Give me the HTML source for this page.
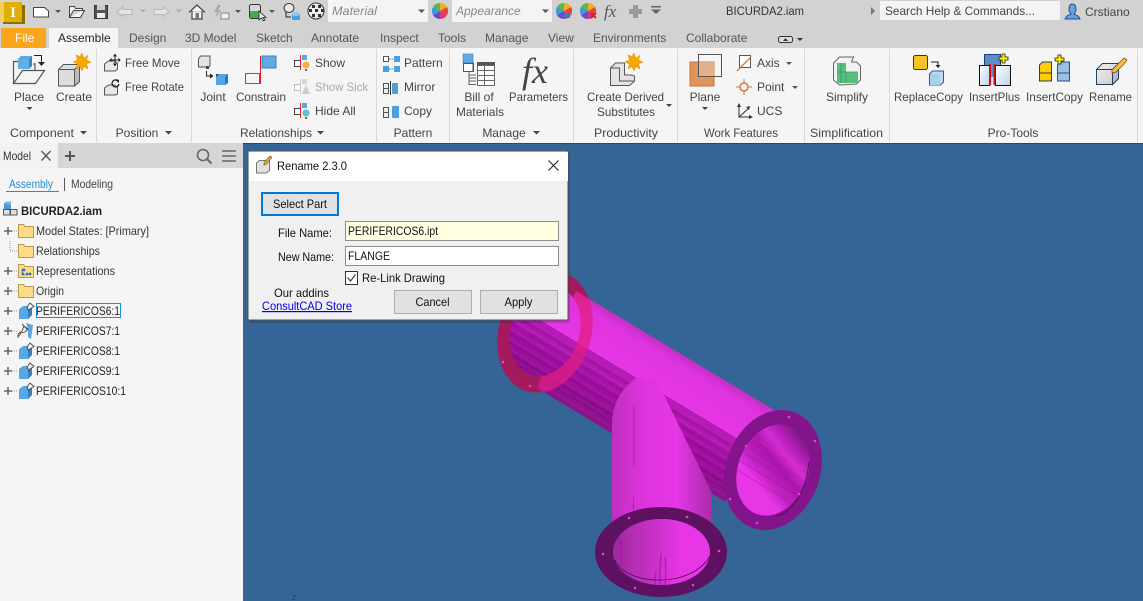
<!DOCTYPE html>
<html><head><meta charset="utf-8">
<style>
html,body{margin:0;padding:0;width:1143px;height:601px;overflow:hidden;background:#356496}
svg{display:block;position:absolute;left:0;top:0}
text{font-family:"Liberation Sans",sans-serif;font-size:12px;fill:#444}
.m{text-anchor:middle}
.d{fill:#111;font-size:12px}
.tab{fill:#555}
.g{fill:#aaa}
.tr{font-size:11.6px;fill:#333}
</style></head><body>
<svg width="1143" height="601" viewBox="0 0 1143 601" xmlns="http://www.w3.org/2000/svg">
<defs>
<linearGradient id="tube" x1="0" y1="0" x2="0" y2="1">
<stop offset="0" stop-color="#c62ec6"/><stop offset=".1" stop-color="#df34df"/><stop offset=".41" stop-color="#e636e6"/><stop offset=".45" stop-color="#b41cb4"/><stop offset=".7" stop-color="#a010a0"/><stop offset="1" stop-color="#8c128c"/>
</linearGradient>
<linearGradient id="branch" x1="0" y1="0" x2="1" y2="0">
<stop offset="0" stop-color="#c030c0"/><stop offset=".35" stop-color="#e034e0"/><stop offset=".65" stop-color="#e636e6"/><stop offset="1" stop-color="#a92ba9"/>
</linearGradient>
<linearGradient id="hole3" x1="0" y1="0" x2="1" y2="0">
<stop offset="0" stop-color="#9c2a9c"/><stop offset=".45" stop-color="#cc32cc"/><stop offset=".7" stop-color="#e636e6"/><stop offset="1" stop-color="#e636e6"/>
</linearGradient>
<linearGradient id="hole2" gradientUnits="userSpaceOnUse" x1="795" y1="430" x2="748" y2="510">
<stop offset="0" stop-color="#701c78"/><stop offset=".12" stop-color="#a51aa8"/><stop offset=".28" stop-color="#d42cd4"/><stop offset=".42" stop-color="#ac14ac"/><stop offset=".6" stop-color="#c424c4"/><stop offset=".72" stop-color="#e636e6"/><stop offset="1" stop-color="#e636e6"/>
</linearGradient>
<linearGradient id="glass" x1="0" y1="0" x2="1" y2="1"><stop offset="0" stop-color="#fff"/><stop offset="1" stop-color="#b8d4ea"/></linearGradient>
<linearGradient id="cubeg" x1="0" y1="0" x2="1" y2="1"><stop offset="0" stop-color="#f2f2f2"/><stop offset="1" stop-color="#c8c8c8"/></linearGradient>
<clipPath id="tubeclip">
<polygon points="576,291 779,413 725,502 537,388"/>
<ellipse cx="545" cy="331" rx="34" ry="46" transform="rotate(18 545 331)"/>
</clipPath>
<clipPath id="polyclip"><polygon points="576,291 779,413 725,502 537,388"/></clipPath>
<clipPath id="hole2c"><ellipse cx="773" cy="470" rx="35" ry="47" transform="rotate(21 773 470)"/></clipPath>
<symbol id="folder" viewBox="0 0 16 14" width="16" height="14"><path d="M.5 13.5V.5h5l1.500 2h8.500v11z" fill="#fbdb84" stroke="#b79a4e"/></symbol>
<symbol id="part" viewBox="0 0 17 17" width="17" height="17">
<path d="M1 7l4-3h9v9l-4 4H1z" fill="#58a6e2"/><path d="M10 7l4-3v9l-4 4z" fill="#3a80c0"/>
<path d="M9 5l3-4 4 3.500-4 2.500-1 2z" fill="#f2f2f2" stroke="#444" stroke-width=".9"/></symbol>
<symbol id="wheel" viewBox="0 0 16 16" width="16" height="16">
<path d="M8 8V0a8 8 0 0 1 7 4z" fill="#f4b020"/><path d="M8 8l7-4a8 8 0 0 1 0 8z" fill="#e2483a"/><path d="M8 8l7 4a8 8 0 0 1-7 4z" fill="#d63a80"/><path d="M8 8v8a8 8 0 0 1-7-4z" fill="#6a48d0"/><path d="M8 8l-7 4a8 8 0 0 1 0-8z" fill="#3a9ad8"/><path d="M8 8L1 4a8 8 0 0 1 7-4z" fill="#58b848"/></symbol>
<symbol id="star" viewBox="-9 -9 18 18" width="18" height="18"><path d="M0-9l2 5.500L6-7 4.500-2 9 0 4.500 2 6 7 2 4.500 0 9-2 4.500-6 7-4.500 2-9 0-4.500-2-6-7-2-5.500z" fill="#f7a800" stroke="#e88a00" stroke-width=".5"/></symbol>
</defs>

<!-- viewport -->
<rect x="243" y="143" width="900" height="458" fill="#356496"/>
<text x="292" y="600" style="font-size:9px;fill:#2233dd">z</text>

<!-- 3D model -->
<g transform="rotate(18 545 332)">
<path fill-rule="evenodd" d="M499 332a46 62 0 1 0 92 0a46 62 0 1 0-92 0zM511 331a34 46 0 1 0 68 0a34 46 0 1 0-68 0z" fill="#a5195f"/>
</g>
<g clip-path="url(#tubeclip)">
<g transform="translate(565 284) rotate(31)">
<rect x="-70" y="-20" width="330" height="20" fill="#c62ec6"/>
<rect x="-70" width="330" height="104" fill="url(#tube)"/>
<g opacity=".5">
<rect x="-70" y="44" width="330" height="1.500" fill="#8e0c90"/><rect x="-70" y="49" width="330" height="1" fill="#cc26cc"/>
<rect x="-70" y="52" width="330" height="2" fill="#900e92"/><rect x="-70" y="57" width="330" height="1.500" fill="#d42cd4"/>
<rect x="-70" y="61" width="330" height="2" fill="#8a0c8c"/><rect x="-70" y="66" width="330" height="1" fill="#c824c8"/>
<rect x="-70" y="69" width="330" height="2.500" fill="#860c88"/><rect x="-70" y="75" width="330" height="1" fill="#c020c0"/>
<rect x="-70" y="78" width="330" height="2" fill="#800a82"/><rect x="-70" y="84" width="330" height="1" fill="#b81cb8"/>
<rect x="-70" y="87" width="330" height="2.500" fill="#760a78"/><rect x="-70" y="93" width="330" height="1.500" fill="#7c0a80"/>
<rect x="-70" y="98" width="330" height="1.500" fill="#a020a0"/>
</g>
</g>
</g>
<!-- back flange overlay where it crosses the tube -->
<g clip-path="url(#polyclip)">
<g transform="rotate(18 545 332)">
<path fill-rule="evenodd" d="M499 332a46 62 0 1 0 92 0a46 62 0 1 0-92 0zM511 331a34 46 0 1 0 68 0a34 46 0 1 0-68 0z" fill="#e11e82" fill-opacity=".75"/>
</g>
</g>
<circle cx="503" cy="362" r="1.200" fill="#e050d0"/><circle cx="530" cy="386" r="1.200" fill="#e050d0"/>
<!-- branch -->
<path d="M612 423C612 402 624 386 638 377L652 378L663 393L712 493V530H612z" fill="url(#branch)"/>
<path d="M634 406V467M633.500 497V510" stroke="#9a2f9e" stroke-width=".8"/>
<!-- right flange -->
<g transform="rotate(20 773 470)">
<ellipse cx="773" cy="470" rx="47" ry="61.500" fill="#84148c"/>
</g>
<ellipse cx="773" cy="470" rx="35" ry="47" transform="rotate(21 773 470)" fill="url(#hole2)"/>
<g clip-path="url(#hole2c)" opacity=".35">
<path d="M735 440L815 488M735 448L815 496M735 458L815 506M730 466L810 514" stroke="#9a109a" stroke-width="1.200" fill="none"/>
<path d="M740 430L815 475" stroke="#e040e0" stroke-width="1" fill="none"/>
</g>
<path d="M776 516C792 513 806 492 809 462" stroke="#501058" fill="none"/>
<g fill="#d848d0"><circle cx="789" cy="417" r="1.300"/><circle cx="815" cy="441" r="1.300"/><circle cx="746" cy="446" r="1.300"/><circle cx="730" cy="499" r="1.300"/><circle cx="757" cy="523" r="1.300"/><circle cx="799" cy="494" r="1.300"/></g>
<!-- bottom flange -->
<path fill-rule="evenodd" d="M595 552a66 45 0 1 0 132 0a66 45 0 1 0-132 0zM613 552a48.500 33 0 1 0 97 0a48.500 33 0 1 0-97 0z" fill="#5e1160"/>
<ellipse cx="661.500" cy="552" rx="48.500" ry="33" fill="url(#hole3)"/>
<path d="M660 585c-1-8 0-18 1-32M665 585c1-10 1-20 0-28M655 585c0-5 0-10 1-14M620 560V535M622 565V540" stroke="#a815a8" stroke-width="1.500" opacity=".7"/>
<path d="M615 560C625 585 690 590 710 556" stroke="#4a0e50" fill="none" stroke-width=".8"/>
<g fill="#d848d0"><circle cx="629" cy="518" r="1.300"/><circle cx="687" cy="517" r="1.300"/><circle cx="603" cy="554" r="1.300"/><circle cx="719" cy="551" r="1.300"/><circle cx="635" cy="588" r="1.300"/><circle cx="693" cy="585" r="1.300"/></g>

<!-- title bar -->
<rect x="0" y="0" width="1143" height="48" fill="#d2d2d2"/>
<rect x="3" y="5" width="22" height="19" fill="#8a7000"/>
<rect x="0" y="2" width="22" height="20" fill="#dfb000"/><rect x="0" y="2" width="4" height="20" fill="#eed05a"/>
<text x="13" y="17" class="m" style="font:bold 15px 'Liberation Serif',serif;fill:#fff">I</text>
<!-- new -->
<path d="M33.500 7.500h11l4 3.500v6h-15z" fill="#fff" stroke="#444"/>
<path d="M55 10h6l-3 3z" fill="#555"/>
<path d="M69.500 17.500v-11h5l1 2h7v2M69.500 17.500h11l4-7h-11z" fill="#f4f4f4" stroke="#444"/>
<rect x="94.500" y="5.500" width="13" height="13" fill="#555" stroke="#333"/><rect x="97" y="5" width="8" height="5" fill="#ccc"/><rect x="97" y="13" width="8" height="5" fill="#eee"/>
<path d="M117 11.500l6-4.500v2.500h9v5h-9v2z" fill="#e4e4e4" stroke="#b5b5b5"/><path d="M140 9.500h6l-3 3z" fill="#aaa"/>
<path d="M169 11.500l-6-4.500v2.500h-9v5h9v2z" fill="#e4e4e4" stroke="#b5b5b5"/><path d="M176 9.500h6l-3 3z" fill="#aaa"/>
<path d="M189 12.500L197 5l8 7.500M192 11v8h10v-8" fill="#f7f7f7" stroke="#444" stroke-width="1.200"/><rect x="195.500" y="13" width="3.500" height="6" fill="#777"/>
<path d="M218 5l-4 7h3l-2 6 6-8h-3l3-5z" fill="#a8a8a8"/><path d="M221 13h8v6h-8z" fill="#eee" stroke="#888"/><path d="M235 10h6l-3 3z" fill="#555"/>
<rect x="249.500" y="4.500" width="11" height="14" rx="2" fill="#d8d8d8" stroke="#333"/><rect x="250" y="11" width="10" height="7" fill="#49a94a"/>
<path d="M259 11v9l2.500-2 2 3 1.500-1-2-2.500h3z" fill="#eee" stroke="#222" stroke-width=".8"/><path d="M269 10h6l-3 3z" fill="#555"/>
<ellipse cx="289" cy="8" rx="5" ry="4.500" fill="#e8e8e8" stroke="#333"/><path d="M286 12v5h5" fill="none" stroke="#222"/><path d="M292 14h8v6h-8z" fill="#4aa0dc"/><ellipse cx="296" cy="14" rx="4" ry="2" fill="#8cc8f0"/>
<circle cx="316" cy="11" r="8" fill="#eee" stroke="#333"/>
<g fill="#333"><rect x="312" y="5" width="3" height="3"/><rect x="318" y="5" width="3" height="3"/><rect x="309" y="9" width="3" height="3"/><rect x="315" y="9" width="3" height="3"/><rect x="321" y="9" width="3" height="3"/><rect x="312" y="14" width="3" height="3"/><rect x="318" y="14" width="3" height="3"/></g>
<rect x="328" y="0" width="100" height="22" fill="#f4f4f4"/>
<text x="332" y="15" style="font-style:italic;fill:#888" textLength="45" lengthAdjust="spacingAndGlyphs">Material</text>
<path d="M418 9.500h7l-3.500 3.500z" fill="#555"/>
<use href="#wheel" x="432" y="3"/>
<rect x="452" y="0" width="100" height="22" fill="#f4f4f4"/>
<text x="456" y="15" style="font-style:italic;fill:#888">Appearance</text>
<path d="M542 9.500h7l-3.500 3.500z" fill="#555"/>
<use href="#wheel" x="556" y="3"/><rect x="564" y="13" width="6" height="5" fill="#2a80d0"/>
<use href="#wheel" x="580" y="3"/><path d="M591 13l5 5M596 13l-5 5" stroke="#e02020" stroke-width="2"/>
<text x="604" y="17" style="font:italic 17px 'Liberation Serif',serif;fill:#555">fx</text>
<path d="M633 5h5v4h4v5h-4v4h-5v-4h-4V9h4z" fill="#999"/>
<path d="M651 6h10v1.500h-10zM651 9.500h10l-5 4.500z" fill="#666"/>
<text x="726" y="15" style="fill:#333" textLength="78" lengthAdjust="spacingAndGlyphs">BICURDA2.iam</text>
<path d="M871 7l4 4-4 4z" fill="#777"/>
<rect x="880" y="1" width="180" height="19" fill="#f4f4f4"/>
<text x="885" y="15" style="fill:#444" textLength="150" lengthAdjust="spacingAndGlyphs">Search Help &amp; Commands...</text>
<path d="M1072 4c3 0 4 2.500 4 5 0 3-1 4-2 5 2 1 5 1.500 6 5h-15c1-3.500 4-4 6-5-1-1-2-2-2-5 0-2.500 1-5 3-5z" fill="#6aa0d8" stroke="#1f4f90"/>
<text x="1085" y="16" style="fill:#444">Crstiano</text>

<!-- tabs -->
<rect x="1" y="28" width="45" height="20" fill="#fba51c"/>
<text x="15" y="42" style="fill:#fff">File</text>
<rect x="49" y="28" width="69" height="20" fill="#f5f5f5"/>
<text x="58" y="42" style="fill:#222">Assemble</text>
<g class="tabs">
<text x="129" y="42" class="tab">Design</text><text x="185" y="42" class="tab">3D Model</text><text x="256" y="42" class="tab">Sketch</text><text x="311" y="42" class="tab">Annotate</text><text x="380" y="42" class="tab">Inspect</text><text x="438" y="42" class="tab">Tools</text><text x="485" y="42" class="tab">Manage</text><text x="548" y="42" class="tab">View</text><text x="593" y="42" class="tab">Environments</text><text x="686" y="42" class="tab">Collaborate</text>
</g>
<rect x="778.500" y="36.500" width="14" height="6" rx="2" fill="#ddd" stroke="#333"/><path d="M783 41l2.500-3 2.500 3z" fill="#333"/>
<path d="M797 38h6l-3 3z" fill="#333"/>

<!-- ribbon -->
<rect x="0" y="48" width="1143" height="95" fill="#f5f5f5"/>
<rect x="243" y="143" width="900" height="1" fill="#27486e"/>
<g fill="#d8d8d8">
<rect x="96" y="49" width="1" height="93"/><rect x="191" y="49" width="1" height="93"/><rect x="376" y="49" width="1" height="93"/><rect x="449" y="49" width="1" height="93"/><rect x="573" y="49" width="1" height="93"/><rect x="677" y="49" width="1" height="93"/><rect x="804" y="49" width="1" height="93"/><rect x="889" y="49" width="1" height="93"/><rect x="1137" y="49" width="1" height="93"/>
</g>

<!-- Place -->
<path d="M13.500 83.500v-22h5M13.500 83.500h22l9-13h-22zM35 70v-6h-2" fill="none" stroke="#555" stroke-width="1.200"/>
<path d="M18 59l3-3h11v10l-3 3H18z" fill="#5ba8e2"/><path d="M29 59l3-3v10l-3 3z" fill="#3a82c2"/><rect x="18" y="59" width="11" height="10" fill="#62aee6"/>
<path d="M34 55.500h7.500v7" fill="none" stroke="#222"/><path d="M38 62h7l-3.500 4z" fill="#222"/>
<text x="29" y="101" class="m">Place</text><path d="M26.500 107h6l-3 3z" fill="#444"/>
<!-- Create -->
<path d="M58.500 69.500l5-5h16v17l-5 4.500h-16z" fill="#ddd" stroke="#555"/><path d="M74.500 69.500l5-5v17l-5 4.500z" fill="#bbb" stroke="#555"/><path d="M58.500 69.500h16v16.500" fill="none" stroke="#555"/>
<use href="#star" x="73" y="53"/>
<text x="74" y="101" class="m">Create</text>
<!-- Free move -->
<path d="M104.500 64l4-3h6l3 2v6l-2 2h-11z" fill="#e6e6e6" stroke="#555"/>
<path d="M115 55v10M110.500 60h9M113.500 56.500l1.500-2 1.500 2M113.500 63.500l1.500 2 1.500-2M111.500 58.500l-1.500 1.500 1.500 1.500M118.500 58.500l1.500 1.500-1.500 1.500" fill="none" stroke="#222"/>
<text x="125" y="67" textLength="55" lengthAdjust="spacingAndGlyphs">Free Move</text>
<path d="M104.500 88l4-3h6l3 2v7l-2 1h-11z" fill="#e6e6e6" stroke="#555"/>
<path d="M119 84a3.500 3.500 0 1 1-1.500-3.500" fill="none" stroke="#222" stroke-width="1.300"/><path d="M115 80l4-.5v3.500z" fill="#222"/>
<text x="125" y="91" textLength="59" lengthAdjust="spacingAndGlyphs">Free Rotate</text>
<!-- Joint -->
<path d="M198.500 59l2-3h9.500v10l-2 1h-9.500z" fill="#e4e4e4" stroke="#555"/>
<rect x="206" y="66" width="3" height="3" fill="#444"/>
<path d="M206.500 71v5h5" fill="none" stroke="#222"/><path d="M210 73.500l3.500 2.500-3.500 2.500z" fill="#222"/><rect x="216" y="74" width="3" height="3" fill="#444"/>
<path d="M216 77l3-3h9v9l-3 2h-9z" fill="#55a6e4"/><path d="M225 77l3-3v9l-3 2z" fill="#2f78b8"/>
<text x="213" y="101" class="m">Joint</text>
<!-- Constrain -->
<rect x="260" y="56" width="1" height="28" fill="#d82020"/>
<rect x="262" y="56" width="14" height="12" fill="#62aae4" stroke="#3a80c0"/>
<rect x="245.500" y="73.500" width="14" height="10" fill="#f5f5f5" stroke="#666"/>
<text x="261" y="101" class="m" textLength="50" lengthAdjust="spacingAndGlyphs">Constrain</text>
<!-- show -->
<g id="sh"><path d="M294.500 60.500h6v6h-6z" fill="#fff" stroke="#444"/><rect x="300" y="55" width="1" height="15" fill="#d82020"/><rect x="302" y="55" width="5" height="5" fill="#5aa6e0"/><circle cx="306" cy="65" r="3.500" fill="#f0b040"/><rect x="305" y="69" width="2" height="2" fill="#666"/></g>
<text x="315" y="67">Show</text>
<path d="M294.500 84.500h6v6h-6z" fill="#fff" stroke="#bbb"/><rect x="300" y="79" width="1" height="15" fill="#ccc"/><rect x="302" y="79" width="5" height="5" fill="#d5d5d5"/><path d="M306 85l4 9h-8z" fill="#ccc"/>
<text x="315" y="91" class="g" textLength="53" lengthAdjust="spacingAndGlyphs">Show Sick</text>
<path d="M294.500 108.500h6v6h-6z" fill="#fff" stroke="#444"/><rect x="300" y="103" width="1" height="15" fill="#d82020"/><rect x="302" y="103" width="5" height="5" fill="#5aa6e0"/><circle cx="306" cy="113" r="3.500" fill="#58c0d0"/><rect x="305" y="117" width="2" height="2" fill="#666"/>
<text x="315" y="115">Hide All</text>
<!-- pattern group -->
<rect x="383.500" y="56.500" width="5" height="5" fill="#fff" stroke="#555"/><rect x="394" y="56" width="6" height="6" fill="#4aa0dc"/><rect x="383" y="66" width="6" height="6" fill="#4aa0dc"/><rect x="394" y="66" width="6" height="6" fill="#4aa0dc"/><path d="M389 59h5M389 69h5" stroke="#666" stroke-dasharray="1.500 1"/>
<text x="404" y="67">Pattern</text>
<path d="M383.500 83.500h5v10h-5zM383.500 88.500h5" fill="#eee" stroke="#555"/><rect x="390" y="81" width="1" height="14" fill="#333"/><rect x="392" y="83" width="6" height="11" rx="1" fill="#4aa0dc"/>
<text x="404" y="91">Mirror</text>
<path d="M383.500 107.500h5v10h-5zM383.500 112.500h5" fill="#eee" stroke="#555"/><rect x="392" y="106" width="7" height="12" rx="1" fill="#4aa0dc"/>
<text x="404" y="115">Copy</text>
<!-- BOM -->
<rect x="463" y="54" width="10" height="9" fill="#62aae4" stroke="#3a80c0" stroke-width=".6"/>
<path d="M463.500 63.500h10v8h-10zM473 62v10" fill="#fff" stroke="#555"/>
<rect x="477" y="62" width="18" height="3" fill="#555"/>
<path d="M477.500 65.500h17v20h-17zM477.500 70.500h17M477.500 75.500h17M477.500 80.500h17M484.500 65.500v20" fill="#fff" stroke="#666"/>
<path d="M469 72v13M469 75h7M469 78h7M469 81h7M469 84.500h7" stroke="#666" fill="none"/>
<text x="479" y="101" class="m">Bill of</text><text x="480" y="116" class="m" textLength="48" lengthAdjust="spacingAndGlyphs">Materials</text>
<text x="522" y="83" style="font:italic 36px 'Liberation Serif',serif;fill:#444">fx</text>
<text x="538.500" y="101" class="m" textLength="59" lengthAdjust="spacingAndGlyphs">Parameters</text>
<!-- derived -->
<path d="M610.500 68l5-5h9v12h6l4 1v5l-5 4.500h-19z" fill="#e4e4e4" stroke="#555"/><path d="M610.500 68h9v13h14" fill="none" stroke="#555"/>
<use href="#star" x="625" y="53"/>
<text x="625.500" y="101" class="m" textLength="77" lengthAdjust="spacingAndGlyphs">Create Derived</text><text x="626" y="116" class="m" textLength="58" lengthAdjust="spacingAndGlyphs">Substitutes</text>
<path d="M666 104h6l-3 3z" fill="#444"/>
<!-- plane -->
<rect x="690" y="62" width="24" height="24" fill="#e0935a" stroke="#c8763a"/>
<rect x="698" y="62" width="16" height="15" fill="#e0b08c"/>
<rect x="698.500" y="54.500" width="23" height="22" fill="none" stroke="#555"/>
<text x="705" y="101" class="m">Plane</text><path d="M702 107h6l-3 3z" fill="#444"/>
<rect x="739.500" y="55.500" width="11" height="12" fill="#fff" stroke="#555"/><path d="M737 71l14-14" stroke="#d8763a" stroke-width="1.300"/>
<text x="757" y="67">Axis</text><path d="M786 62h6l-3 3z" fill="#555"/>
<path d="M736 87h16M744 79v16" stroke="#d8763a"/><circle cx="744" cy="87" r="4" fill="#f5f5f5" stroke="#d8763a" stroke-width="1.500"/>
<text x="757" y="91">Point</text><path d="M792 86h6l-3 3z" fill="#555"/>
<path d="M739 104v13h12M739 117l10-9" fill="none" stroke="#333"/><path d="M737 107l2-4 2 4zM749 115l4 2-4 2zM746 107l4-1-1 4z" fill="#333"/>
<text x="757" y="115">UCS</text>
<text x="741" y="137" class="m" textLength="74" lengthAdjust="spacingAndGlyphs">Work Features</text>
<!-- simplify -->
<path d="M833.500 63l6-6h14l-2 5h5l4 4v14l-4 4-17 1-6-5z" fill="#f2f2f2" stroke="#666"/>
<path d="M837 63h9v9h12v11h-21z" fill="#55bf80"/><path d="M837 72h21M846 72v11M841 63v20" stroke="#2f9a5a" stroke-width=".7"/>
<text x="847" y="101" class="m">Simplify</text>
<!-- replacecopy -->
<rect x="913.500" y="55.500" width="14" height="14" rx="2" fill="#f4c420" stroke="#333"/>
<path d="M931 62h7v4" fill="none" stroke="#222"/><path d="M935.500 65h5l-2.500 3z" fill="#222"/>
<path d="M929.500 74l3-3h11v11l-3 3h-11z" fill="#c0dcf0" stroke="#2a5a90"/><rect x="930" y="74" width="10" height="11" fill="#a8d0ea"/>
<text x="928.500" y="101" class="m" textLength="69" lengthAdjust="spacingAndGlyphs">ReplaceCopy</text>
<!-- insertplus -->
<rect x="984.500" y="54.500" width="16" height="30" fill="#5a90c8" stroke="#1f3f70"/>
<rect x="979.500" y="65.500" width="10" height="20" fill="url(#glass)" stroke="#111"/><rect x="995.500" y="65.500" width="15" height="20" fill="url(#glass)" stroke="#111"/>
<rect x="989.500" y="77" width="6" height="8" fill="#d0e4f4"/>
<path d="M990 64v21M994.500 64v21" stroke="#d01010" stroke-width="2"/>
<path d="M1002 54h3v3h3v3h-3v3h-3v-3h-3v-3h3z" fill="#fff000" stroke="#222" stroke-width=".8"/>
<text x="994.500" y="101" class="m" textLength="51" lengthAdjust="spacingAndGlyphs">InsertPlus</text>
<!-- insertcopy -->
<path d="M1039.500 65l3-3h9v19h-12z" fill="#fc0" stroke="#1f3f70"/><path d="M1039.500 73h12" stroke="#1f3f70"/>
<path d="M1057.500 65l3-3h9v19h-12z" fill="#9cc0e4" stroke="#1f4f9a"/><path d="M1057.500 73h12" stroke="#1f4f9a"/>
<path d="M1058 55h3v3h3v3h-3v3h-3v-3h-3v-3h3z" fill="#fff000" stroke="#222" stroke-width=".8"/>
<text x="1054.500" y="101" class="m" textLength="57" lengthAdjust="spacingAndGlyphs">InsertCopy</text>
<!-- rename -->
<path d="M1096.500 69.500l6-6h16v15l-6 6h-16z" fill="url(#cubeg)" stroke="#1f3f60"/>
<path d="M1112.500 69.500l6-6v15l-6 6z" fill="#bbb" stroke="#1f3f60"/><path d="M1096.500 69.500h16" stroke="#1f3f60"/>
<path d="M1112 70l8-8 4-4 3 2-4 5-7 7-4 1z" fill="#f4c040" stroke="#704010" stroke-width=".7"/>
<text x="1110.500" y="101" class="m" textLength="43" lengthAdjust="spacingAndGlyphs">Rename</text>

<!-- panel titles -->
<text x="42" y="137" class="m" textLength="64" lengthAdjust="spacingAndGlyphs">Component</text><path d="M80 131h7l-3.500 3.500z" fill="#444"/>
<text x="137" y="137" class="m">Position</text><path d="M165 131h7l-3.500 3.500z" fill="#444"/>
<text x="276" y="137" class="m">Relationships</text><path d="M317 131h7l-3.500 3.500z" fill="#444"/>
<text x="413" y="137" class="m">Pattern</text>
<text x="504" y="137" class="m">Manage</text><path d="M533 131h7l-3.500 3.500z" fill="#444"/>
<text x="626" y="137" class="m" textLength="64" lengthAdjust="spacingAndGlyphs">Productivity</text>
<text x="846.500" y="137" class="m" textLength="73" lengthAdjust="spacingAndGlyphs">Simplification</text>
<text x="1013" y="137" class="m">Pro-Tools</text>

<!-- browser -->
<rect x="0" y="143" width="243" height="458" fill="#f5f5f5"/>
<rect x="58" y="143" width="185" height="25" fill="#d6d6d6"/>
<rect x="0" y="143" width="58" height="25" fill="#f2f2f2"/>
<text x="3" y="160" style="fill:#333" textLength="28" lengthAdjust="spacingAndGlyphs">Model</text>
<path d="M41.500 151l9 9.500M50.500 151l-9 9.500" stroke="#555" stroke-width="1.400"/>
<path d="M70 151v10M65 156h10" stroke="#555" stroke-width="2"/>
<circle cx="203" cy="155" r="5.500" fill="none" stroke="#666" stroke-width="1.600"/><path d="M207 159l4.500 4.500" stroke="#666" stroke-width="2"/>
<path d="M222 151h14M222 156h14M222 161h14" stroke="#666" stroke-width="1.600"/>
<text x="9" y="188" style="fill:#1b8fd8" textLength="44" lengthAdjust="spacingAndGlyphs">Assembly</text>
<rect x="6" y="191" width="53" height="1" fill="#1b8fd8"/>
<rect x="64" y="178" width="1" height="13" fill="#555"/>
<text x="71" y="188" style="fill:#444" textLength="42" lengthAdjust="spacingAndGlyphs">Modeling</text>
<!-- tree -->
<rect x="4" y="203" width="7" height="7" fill="#4a9ad8"/><path d="M4 203l3-1.500h4v4" fill="#70b4e8"/>
<rect x="3.500" y="209.500" width="6.500" height="5.500" fill="#ddd" stroke="#555"/><rect x="10.500" y="209.500" width="6.500" height="5.500" fill="#ddd" stroke="#555"/>
<text x="21" y="215" style="font-weight:bold;fill:#222" textLength="81" lengthAdjust="spacingAndGlyphs">BICURDA2.iam</text>
<g stroke="#999" stroke-dasharray="1 1"><path d="M10 231h8M10 251h8M10 271h8M10 291h8M10 311h8M10 331h8M10 351h8M10 371h8M10 391h8M10 241v10"/></g>
<g stroke="#666" stroke-width="1.500"><path d="M8 227v8M4 231h8M8 267v8M4 271h8M8 287v8M4 291h8M8 307v8M4 311h8M8 327v8M4 331h8M8 347v8M4 351h8M8 367v8M4 371h8M8 387v8M4 391h8"/></g>
<use href="#folder" x="18" y="224"/><use href="#folder" x="18" y="244"/><use href="#folder" x="18" y="264"/><use href="#folder" x="18" y="284"/>
<path d="M22 269h3v2h-3zM22 271v4h3M26 273h2v2h-2zM29 273h2v2h-2z" fill="#2a70c0" stroke="#2a70c0" stroke-width=".5"/>
<use href="#part" x="18" y="302"/>
<path d="M26 323l7 2-2 14-3-2v-8z" fill="#58a6e2"/><path d="M18 334l4-3 2-5 4 3-3 3-4 1-3 4z" fill="#eee" stroke="#444" stroke-width=".9"/><path d="M22 324l6 6" stroke="#444"/>
<use href="#part" x="18" y="342"/><use href="#part" x="18" y="362"/><use href="#part" x="18" y="382"/>
<text x="36" y="235" class="tr" textLength="113" lengthAdjust="spacingAndGlyphs">Model States: [Primary]</text>
<text x="36" y="255" class="tr" textLength="64" lengthAdjust="spacingAndGlyphs">Relationships</text>
<text x="36" y="275" class="tr" textLength="79" lengthAdjust="spacingAndGlyphs">Representations</text>
<text x="36" y="295" class="tr" textLength="28" lengthAdjust="spacingAndGlyphs">Origin</text>
<text x="36" y="315" class="tr" style="fill:#222" textLength="84" lengthAdjust="spacingAndGlyphs">PERIFERICOS6:1</text>
<text x="36" y="335" class="tr" style="fill:#222" textLength="84" lengthAdjust="spacingAndGlyphs">PERIFERICOS7:1</text>
<text x="36" y="355" class="tr" style="fill:#222" textLength="84" lengthAdjust="spacingAndGlyphs">PERIFERICOS8:1</text>
<text x="36" y="375" class="tr" style="fill:#222" textLength="84" lengthAdjust="spacingAndGlyphs">PERIFERICOS9:1</text>
<text x="36" y="395" class="tr" style="fill:#222" textLength="90" lengthAdjust="spacingAndGlyphs">PERIFERICOS10:1</text>
<rect x="36.500" y="303.500" width="84" height="14" fill="none" stroke="#1b8fd8"/>

<!-- dialog -->
<rect x="250" y="153" width="320" height="170" fill="#000" opacity=".15"/>
<rect x="248" y="151" width="320" height="169" fill="#f0f0f0" stroke="#555"/>
<rect x="249" y="152" width="319" height="29" fill="#fff"/>
<path d="M256.500 163l3-2.500h10v10l-3 2.500h-10z" fill="#e0e0e0" stroke="#777"/>
<path d="M264 163l4-5 2-2 2 1.500-2 2-4 5-2 .5z" fill="#e8b040" stroke="#704010" stroke-width=".6"/>
<text x="277" y="170" style="fill:#111" textLength="70" lengthAdjust="spacingAndGlyphs">Rename 2.3.0</text>
<path d="M548.500 160.500l10 10M558.500 160.500l-10 10" stroke="#222" stroke-width="1.100"/>
<rect x="262" y="193" width="76" height="22" fill="#e1e1e1" stroke="#0078d7" stroke-width="2"/>
<text x="300" y="208" class="m d" textLength="54" lengthAdjust="spacingAndGlyphs">Select Part</text>
<text x="278" y="237" class="d" textLength="54" lengthAdjust="spacingAndGlyphs">File Name:</text>
<rect x="345.500" y="221.500" width="213" height="19" fill="#ffffe1" stroke="#8c8c8c"/>
<text x="348" y="235" class="d" textLength="90" lengthAdjust="spacingAndGlyphs">PERIFERICOS6.ipt</text>
<text x="278" y="261" class="d" textLength="56" lengthAdjust="spacingAndGlyphs">New Name:</text>
<rect x="345.500" y="246.500" width="213" height="19" fill="#fff" stroke="#8c8c8c"/>
<text x="348" y="260" class="d" textLength="42" lengthAdjust="spacingAndGlyphs">FLANGE</text>
<rect x="345.500" y="271.500" width="12" height="13" fill="#fff" stroke="#333"/>
<path d="M347.500 277.500l3 3.500 5-6.500" fill="none" stroke="#444" stroke-width="1.300"/>
<text x="362" y="282" class="d" textLength="83" lengthAdjust="spacingAndGlyphs">Re-Link Drawing</text>
<text x="274" y="297" class="d" textLength="55" lengthAdjust="spacingAndGlyphs">Our addins</text>
<text x="262" y="310" style="fill:#0000ee;text-decoration:underline" textLength="90" lengthAdjust="spacingAndGlyphs">ConsultCAD Store</text>
<rect x="394.500" y="290.500" width="77" height="23" fill="#e1e1e1" stroke="#adadad"/>
<text x="432.500" y="306" class="m d" textLength="34" lengthAdjust="spacingAndGlyphs">Cancel</text>
<rect x="480.500" y="290.500" width="77" height="23" fill="#e1e1e1" stroke="#adadad"/>
<text x="518.500" y="306" class="m d" textLength="28" lengthAdjust="spacingAndGlyphs">Apply</text>
</svg>
</body></html>
